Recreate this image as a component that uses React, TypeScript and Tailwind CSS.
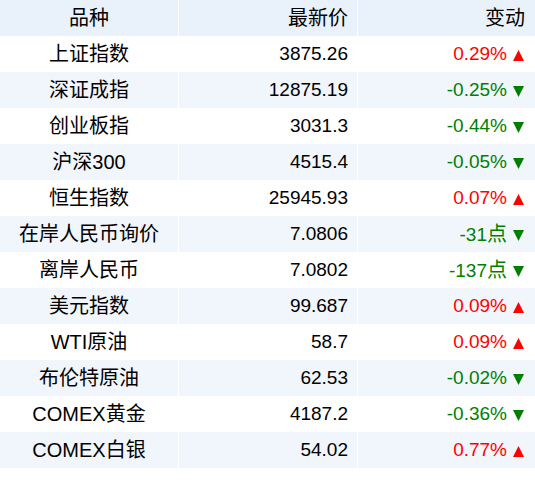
const ROWS: { name: string; price: string; change: string; up: boolean }[] = [
  { name: '上证指数', price: '3875.26', change: '0.29%', up: true },
  { name: '深证成指', price: '12875.19', change: '-0.25%', up: false },
  { name: '创业板指', price: '3031.3', change: '-0.44%', up: false },
  { name: '沪深300', price: '4515.4', change: '-0.05%', up: false },
  { name: '恒生指数', price: '25945.93', change: '0.07%', up: true },
  { name: '在岸人民币询价', price: '7.0806', change: '-31点', up: false },
  { name: '离岸人民币', price: '7.0802', change: '-137点', up: false },
  { name: '美元指数', price: '99.687', change: '0.09%', up: true },
  { name: 'WTI原油', price: '58.7', change: '0.09%', up: true },
  { name: '布伦特原油', price: '62.53', change: '-0.02%', up: false },
  { name: 'COMEX黄金', price: '4187.2', change: '-0.36%', up: false },
  { name: 'COMEX白银', price: '54.02', change: '0.77%', up: true },
];

function Arrow({ up }: { up: boolean }) {
  return (
    <svg width="11" height="11" viewBox="0 0 11 11" className="ml-[6px] mt-[2px] shrink-0">
      {up ? (
        <polygon points="5.5,0 11,11 0,11" fill="#ff0000" />
      ) : (
        <polygon points="0,0 11,0 5.5,11" fill="#008000" />
      )}
    </svg>
  );
}

// the 点 suffix is a CJK glyph, render it at the CJK size
function ChangeText({ text }: { text: string }) {
  if (text.endsWith('点')) {
    return (
      <>
        {text.slice(0, -1)}
        <span className="text-[20px]">点</span>
      </>
    );
  }
  return <>{text}</>;
}

export default function App() {
  return (
    <div
      className="w-[535px] h-[480px] bg-white text-[19px] text-black"
      style={{ fontFamily: '"Liberation Sans", "Noto Sans CJK SC", sans-serif' }}
    >
      {/* header */}
      <div className="grid grid-cols-[178px_178px_177px] gap-x-px h-9 leading-9 text-[20px]">
        <div className="bg-[#e9f1fb] text-center">品种</div>
        <div className="bg-[#e9f1fb] text-right pr-[9px]">最新价</div>
        <div className="bg-[#e9f1fb] text-right pr-[10px]">变动</div>
      </div>

      {ROWS.map((r, i) => {
        const bg = i % 2 === 1 ? 'bg-[#f1f5fc]' : 'bg-white';
        return (
          <div key={r.name} className="grid grid-cols-[178px_178px_177px] gap-x-px h-9 leading-9">
            <div className={`${bg} text-center text-[20px]`}>{r.name}</div>
            <div className={`${bg} text-right pr-[9px]`}>{r.price}</div>
            <div className={`${bg} flex items-center justify-end pr-[11px]`}>
              <span className={r.up ? 'text-[#ff0000]' : 'text-[#008000]'}>
                <ChangeText text={r.change} />
              </span>
              <Arrow up={r.up} />
            </div>
          </div>
        );
      })}
    </div>
  );
}
